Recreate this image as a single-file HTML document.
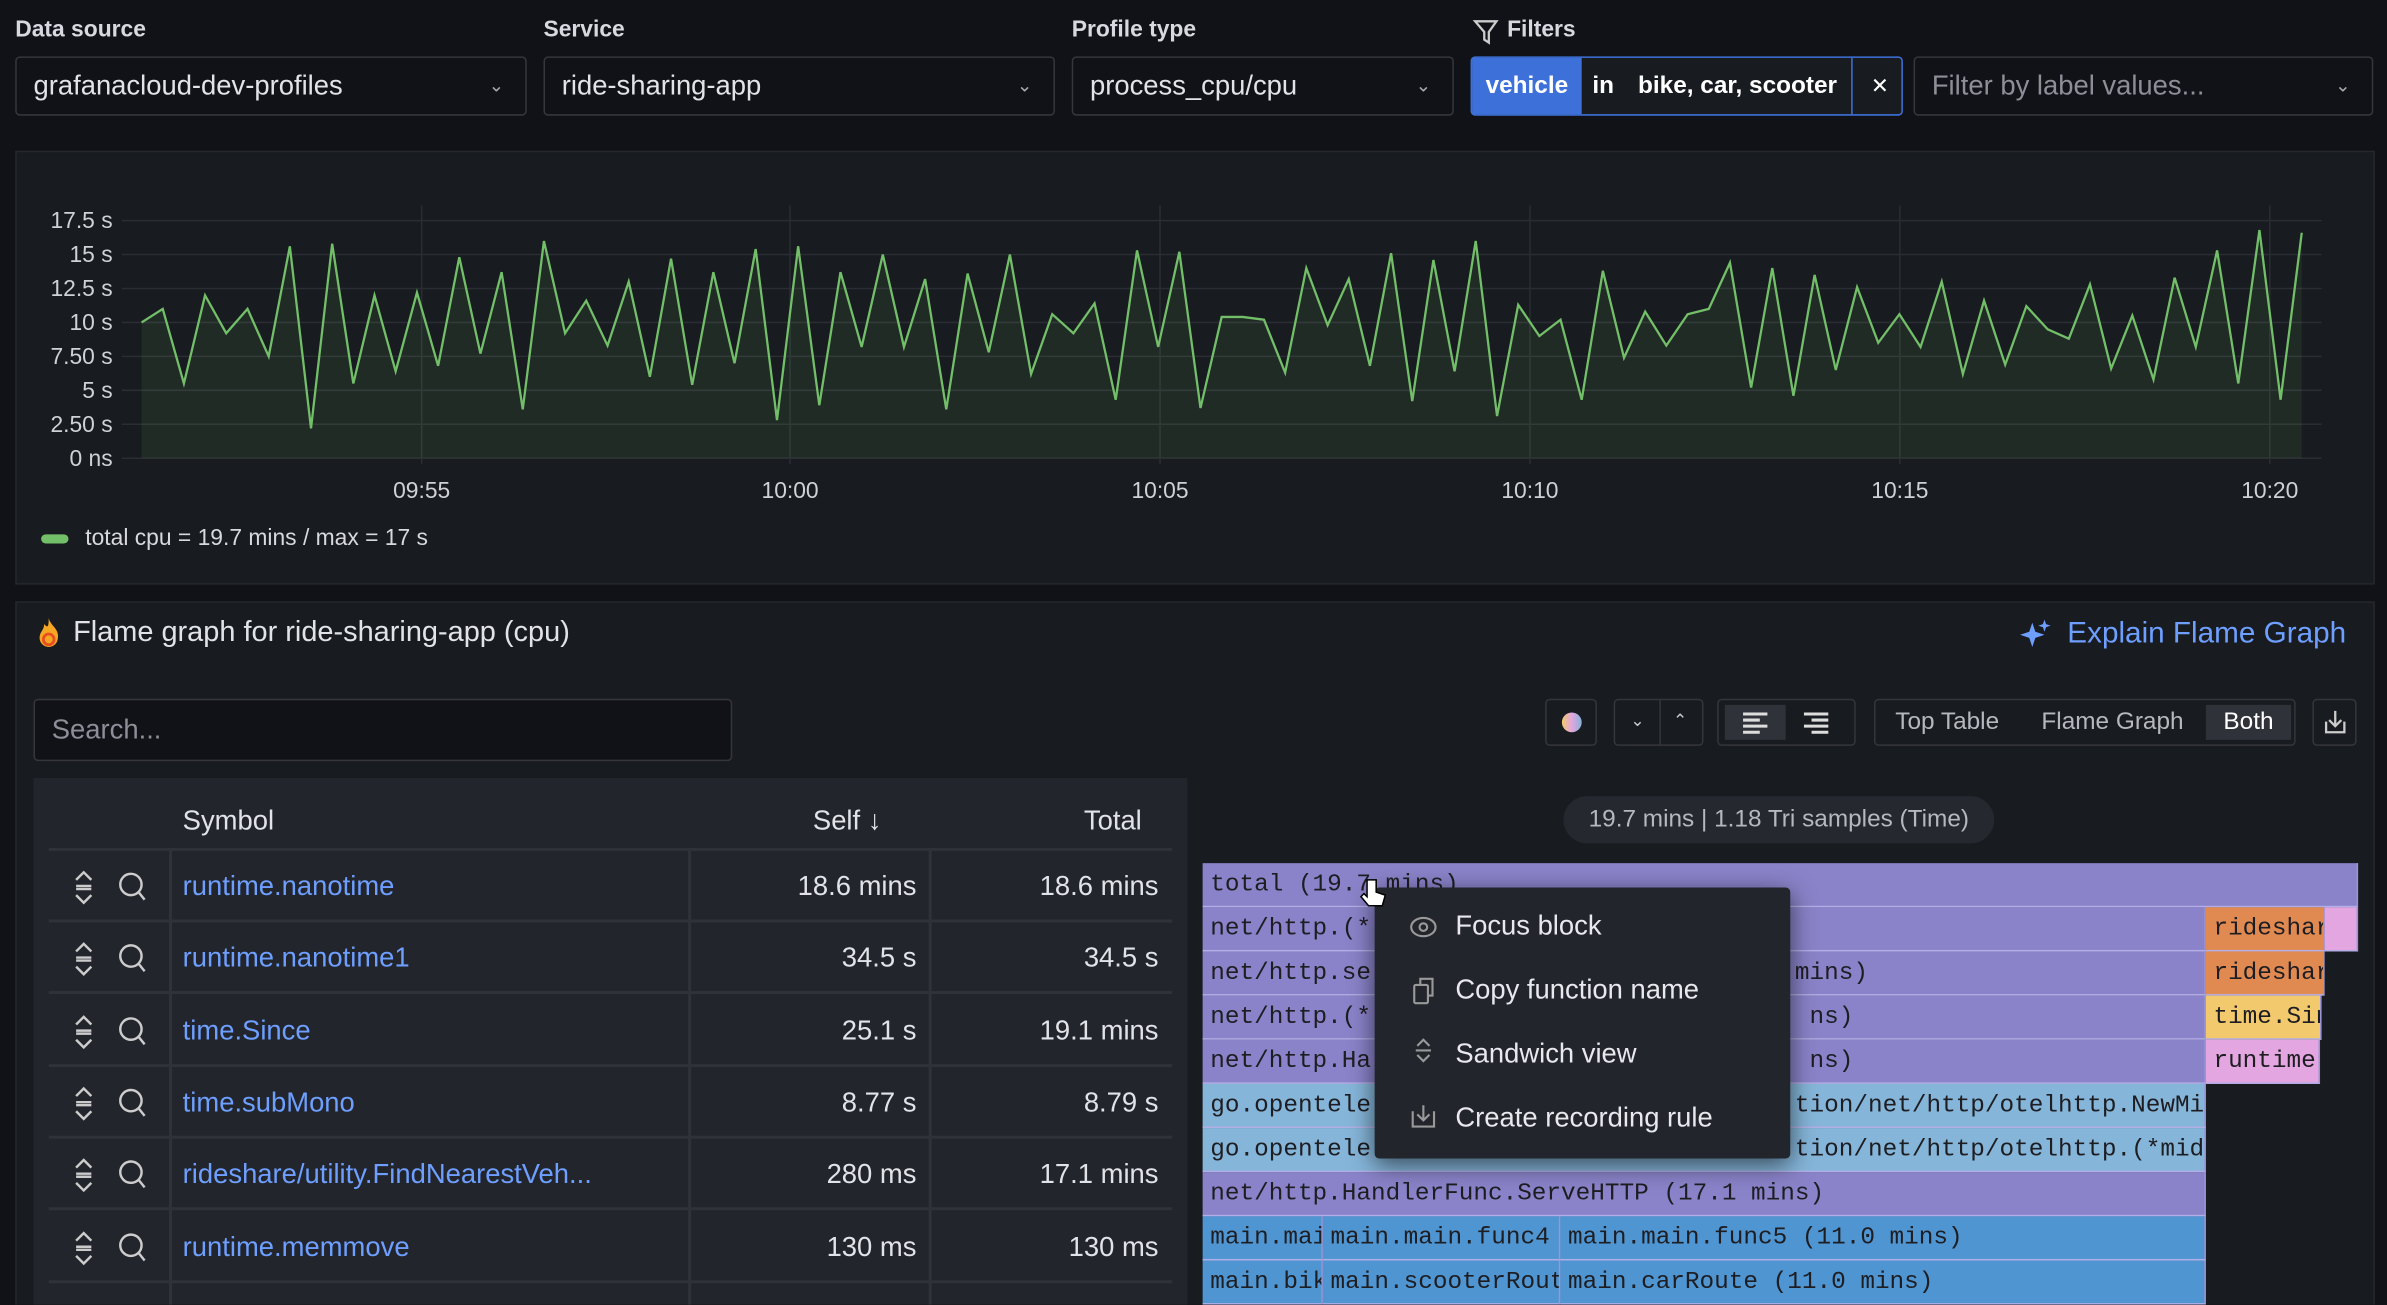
<!DOCTYPE html>
<html><head><meta charset="utf-8"><style>
html,body{margin:0;padding:0;background:#111217;overflow:hidden;width:2387px;height:1304px}
#w{position:absolute;left:0;top:0;width:1568px;height:857px;transform:scale(1.52232);transform-origin:0 0;font-family:"Liberation Sans",sans-serif;color:#ccccdc;overflow:hidden}
.a{position:absolute}
.lbl{font-size:15px;font-weight:bold;color:#d8d9e0;top:11px}
.sel{top:37px;height:39px;border:1px solid #34363c;border-radius:3px;background:#111217;box-sizing:border-box;font-size:18px;color:#e2e3e8;line-height:37px;padding-left:11px}
.chev{position:absolute;right:14px;top:0;font-size:12px;color:#aaa}
.mono{font-family:"Liberation Mono",monospace;font-size:16px;color:#1d1d22;line-height:29px;padding-left:5px;box-sizing:border-box;white-space:nowrap;overflow:hidden;border-right:1px solid #9a95d6;border-bottom:1px solid #b3aee6}
.row{height:47px;border-bottom:2px solid #2f3238;box-sizing:border-box}
.sym{color:#6e9fff;font-size:18px}
.num{font-size:18px;color:#e2e3e8;text-align:right}
.btn{top:459px;height:31px;border:1px solid #34363c;border-radius:3px;box-sizing:border-box}
.mi{font-size:18px;color:#e8e8ee;left:53px}
</style></head><body><div id="w">
<div class="a lbl" style="left:10px">Data source</div>
<div class="a lbl" style="left:357px">Service</div>
<div class="a lbl" style="left:704px">Profile type</div>
<div class="a lbl" style="left:990px">Filters</div>
<svg class="a" style="left:967px;top:12px" width="18" height="18" viewBox="0 0 18 18"><path d="M2 2h14l-5 7v7l-3-2v-5z" fill="none" stroke="#ccc" stroke-width="1.5"/></svg>
<div class="a sel" style="left:10px;width:336px">grafanacloud-dev-profiles<span class="chev">&#8964;</span></div>
<div class="a sel" style="left:357px;width:336px">ride-sharing-app<span class="chev">&#8964;</span></div>
<div class="a sel" style="left:704px;width:251px">process_cpu/cpu<span class="chev">&#8964;</span></div>
<div class="a" style="left:966px;top:37px;width:284px;height:39px;border:1px solid #3d71d9;border-radius:3px;box-sizing:border-box;background:#181b1f;font-size:16px;font-weight:bold;color:#fff;line-height:37px">
<span class="a" style="left:0;top:0;width:72px;height:37px;background:#3d71d9;text-align:center">vehicle</span>
<span class="a" style="left:79px">in</span><span class="a" style="left:109px">bike, car, scooter</span>
<span class="a" style="left:249px;top:0;width:1px;height:37px;background:#3d71d9"></span>
<span class="a" style="left:262px;font-weight:normal;font-size:14px">&#x2715;</span></div>
<div class="a sel" style="left:1257px;width:302px;color:#8e8e99">Filter by label values...<span class="chev">&#8964;</span></div>

<div class="a" style="left:10px;top:99px;width:1550px;height:285px;background:#181b1f;border:1px solid #25272c;box-sizing:border-box"></div>
<svg class="a" style="left:0;top:0" width="1568" height="400" id="ch"></svg>
<div class="a" style="left:27px;top:351px;width:18px;height:6px;border-radius:3px;background:#73bf69"></div>
<div class="a" style="left:56px;top:345px;font-size:15px;color:#d8d9e0">total cpu = 19.7 mins / max = 17 s</div>

<div class="a" style="left:10px;top:395px;width:1550px;height:470px;background:#181b1f;border:1px solid #25272c;box-sizing:border-box"></div>
<svg class="a" style="left:24px;top:405px" width="16" height="22" viewBox="0 0 16 22"><path d="M8 1C9 6 15 8 14 14a6 6 0 0 1-12 0C2 10 5 9 5 5c2 2 3 3 3-4z" fill="#f5a623"/><circle cx="8" cy="15" r="3.5" fill="none" stroke="#e84d1f" stroke-width="1.8"/></svg>
<div class="a" style="left:48px;top:405px;font-size:19px;color:#e2e3e8">Flame graph for ride-sharing-app (cpu)</div>
<svg class="a" style="left:1326px;top:406px" width="22" height="22" viewBox="0 0 22 22"><path d="M9 3l2 6 6 2-6 2-2 6-2-6-6-2 6-2z" fill="#6e9fff"/><path d="M17 1l1 3 3 1-3 1-1 3-1-3-3-1 3-1z" fill="#6e9fff"/></svg>
<div class="a" style="left:1358px;top:405px;font-size:19.5px;color:#6e9fff">Explain Flame Graph</div>
<div class="a" style="left:22px;top:459px;width:459px;height:41px;border:1px solid #34363c;border-radius:3px;background:#111217;box-sizing:border-box;font-size:18px;color:#8e8e99;line-height:39px;padding-left:11px">Search...</div>

<div class="a btn" style="left:1015px;width:34px"><div class="a" style="left:10px;top:8px;width:13px;height:13px;border-radius:50%;background:linear-gradient(90deg,#f2c96d,#e3a6e0,#85b3d8)"></div></div>
<div class="a btn" style="left:1060px;width:59px;font-size:11px;color:#ccc;line-height:29px"><span class="a" style="left:10px">&#8964;</span><span class="a" style="left:29px;top:0;width:1px;height:29px;background:#34363c"></span><span class="a" style="left:38px">&#8963;</span></div>
<div class="a btn" style="left:1128px;width:91px"><div class="a" style="left:4px;top:3px;width:40px;height:23px;background:#2f3238"></div>
<svg class="a" style="left:14px;top:7px" width="66" height="16"><g stroke="#ddd" stroke-width="2"><path d="M2 2h16M2 6h11M2 10h16M2 14h11M42 2h16M47 6h11M42 10h16M47 14h11"/></g></svg></div>
<div class="a btn" style="left:1231px;width:277px;font-size:16px;color:#b6b7bf;line-height:29px"><span class="a" style="left:13px">Top Table</span><span class="a" style="left:109px">Flame Graph</span><span class="a" style="left:217px;top:3px;width:56px;height:23px;background:#2f3238;color:#fff;line-height:23px;text-align:center">Both</span></div>
<div class="a btn" style="left:1519px;width:29px"><svg class="a" style="left:6px;top:5px" width="16" height="18"><path d="M8 2v10M4 8l4 4 4-4M2 9v7h12V9" fill="none" stroke="#ccc" stroke-width="1.5"/></svg></div>

<div class="a" style="left:22px;top:511px;width:758px;height:350px;background:#22252b"></div>
<div class="a" style="left:120px;top:529px;font-size:18px;color:#e2e3e8">Symbol</div>
<div class="a" style="left:534px;top:529px;font-size:18px;color:#e2e3e8">Self &#8595;</div>
<div class="a" style="left:712px;top:529px;font-size:18px;color:#e2e3e8">Total</div>
<div class="a" style="left:32px;top:557px;width:738px;height:2px;background:#2f3238"></div>
<div id="rows"></div>
<div class="a" style="left:111px;top:559px;width:2px;height:300px;background:#2f3238"></div>
<div class="a" style="left:452px;top:559px;width:2px;height:300px;background:#2f3238"></div>
<div class="a" style="left:610px;top:559px;width:2px;height:300px;background:#2f3238"></div>

<div class="a" style="left:1027px;top:523px;width:283px;height:31px;border-radius:16px;background:#25282e;font-size:16px;color:#b6b7bf;line-height:31px;text-align:center">19.7 mins | 1.18 Tri samples (Time)</div>
<div id="fl"></div>

<div class="a" style="left:903px;top:583px;width:273px;height:178px;background:#22252b;border-radius:3px;box-shadow:0 4px 16px rgba(0,0,0,.6)">
<svg class="a" style="left:22px;top:17px" width="20" height="152"><g fill="none" stroke="#999" stroke-width="1.4"><ellipse cx="10" cy="9" rx="8" ry="6"/><circle cx="10" cy="9" r="2.5"/><rect x="4" y="47" width="9" height="12" rx="1"/><path d="M8 47v-4h8v11h-3"/><path d="M6 87l4-4 4 4M6 93l4 4 4-4M5 90h10"/><path d="M10 126v10M6 132l4 4 4-4M3 130v10h14v-10"/></g></svg>
<div class="a mi" style="top:15px">Focus block</div><div class="a mi" style="top:57px">Copy function name</div><div class="a mi" style="top:99px">Sandwich view</div><div class="a mi" style="top:141px">Create recording rule</div></div>
<svg class="a" style="left:893px;top:575px" width="20" height="24"><path d="M5 3v11l-2-2-2 2 5 6h9l2-7-6-2V3z" fill="#fff" stroke="#000" stroke-width="1"/></svg>
</div>
<script>
var v=[10,11,5.5,12,9.2,11,7.5,15.6,2.2,15.8,5.5,12,6.4,12.2,6.8,14.8,7.7,13.7,3.6,16,9.2,11.6,8.3,13,6,14.7,5.4,13.7,7,15.4,2.8,15.6,3.9,13.7,8.2,15,8.2,13.2,3.6,13.6,7.8,15,6.2,10.6,9.2,11.4,4.3,15.3,8.2,15.2,3.7,10.4,10.4,10.2,6.3,14,9.8,13.2,6.8,15.1,4.2,14.6,6.4,16,3.1,11.3,9,10.2,4.3,13.8,7.4,10.8,8.3,10.6,11,14.4,5.2,14,4.6,13.5,6.5,12.6,8.5,10.6,8.2,13,6.2,11.6,6.9,11.2,9.5,8.8,12.8,6.6,10.5,5.8,13.3,8.2,15.3,5.5,16.8,4.3,16.6];
var x0=93,x1=1512,n=v.length,s='';
var Y=function(t){return 301-t*8.92};
var pts=v.map(function(t,i){return (x0+i*(x1-x0)/(n-1)).toFixed(1)+','+Y(t).toFixed(1)}).join(' ');
for(var k=0;k<8;k++){var y=301-k*22.3;s+='<line x1="80" x2="1525" y1="'+y+'" y2="'+y+'" stroke="#2a2d33"/><text x="74" y="'+(y+5)+'" fill="#d0d1d8" font-size="15" text-anchor="end" font-family="Liberation Sans">'+['0 ns','2.50 s','5 s','7.50 s','10 s','12.5 s','15 s','17.5 s'][k]+'</text>';}
var tl=['09:55','10:00','10:05','10:10','10:15','10:20'],tx=[277,519,762,1005,1248,1491];
for(k=0;k<6;k++){s+='<line x1="'+tx[k]+'" x2="'+tx[k]+'" y1="135" y2="305" stroke="#2a2d33"/><text x="'+tx[k]+'" y="327" fill="#d0d1d8" font-size="15" text-anchor="middle" font-family="Liberation Sans">'+tl[k]+'</text>';}
s+='<polygon points="93,301 '+pts+' 1512,301" fill="#73bf69" fill-opacity="0.1"/><polyline points="'+pts+'" fill="none" stroke="#73bf69" stroke-width="1.5"/>';
document.getElementById('ch').innerHTML=s;
var R=[['runtime.nanotime','18.6 mins','18.6 mins'],['runtime.nanotime1','34.5 s','34.5 s'],['time.Since','25.1 s','19.1 mins'],['time.subMono','8.77 s','8.79 s'],['rideshare/utility.FindNearestVeh...','280 ms','17.1 mins'],['runtime.memmove','130 ms','130 ms'],['','','']];
var h='';R.forEach(function(r,i){var t=559+i*47.3;h+='<div class="a row" style="left:32px;top:'+t+'px;width:738px"></div>';if(r[0]){h+='<svg class="a" style="left:47px;top:'+(t+12)+'px" width="50" height="24"><g fill="none" stroke="#ccc" stroke-width="1.6"><path d="M3 7l5-5 5 5M3 17l5 5 5-5M3 11h10M3 13h10"/><circle cx="39" cy="10" r="7"/><path d="M44 15l4 5"/></g></svg><div class="a sym" style="left:120px;top:'+(t+13)+'px">'+r[0]+'</div><div class="a num" style="left:460px;width:142px;top:'+(t+13)+'px">'+r[1]+'</div><div class="a num" style="left:618px;width:143px;top:'+(t+13)+'px">'+r[2]+'</div>';}});
document.getElementById('rows').innerHTML=h;
var P='#8a83c9',LB='#85b5d9',B='#4f95d1',O='#e08a52',Yl='#f2c96d',PK='#e3a6e0';
var sp='                             ';
var F=[[0,790,1548,P,'total (19.7 mins)'],[1,790,1448,P,'net/http.(*'],[1,1449,1526,O,'rideshare'],[1,1527,1548,PK,''],[2,790,1448,P,'net/http.se'+sp+'mins)'],[2,1449,1526,O,'rideshare'],[3,790,1448,P,'net/http.(*'+sp+' ns)'],[3,1449,1524,Yl,'time.Since'],[4,790,1448,P,'net/http.Ha'+sp+' ns)'],[4,1449,1523,PK,'runtime'],[5,790,1448,LB,'go.opentele'+sp+'tion/net/http/otelhttp.NewMiddleware'],[6,790,1448,LB,'go.opentele'+sp+'tion/net/http/otelhttp.(*middleware)'],[7,790,1448,P,'net/http.HandlerFunc.ServeHTTP (17.1 mins)'],[8,790,868,B,'main.main'],[8,869,1024,B,'main.main.func4'],[8,1025,1448,B,'main.main.func5 (11.0 mins)'],[9,790,868,B,'main.bike'],[9,869,1024,B,'main.scooterRoute'],[9,1025,1448,B,'main.carRoute (11.0 mins)'],[10,790,868,'#e0555a',''],[10,869,1024,PK,''],[10,1025,1448,Yl,'']];
h='';F.forEach(function(f){h+='<div class="a mono" style="left:'+f[1]+'px;top:'+(567+f[0]*29)+'px;width:'+(f[2]-f[1]+1)+'px;height:29px;background:'+f[3]+'">'+f[4].replace(/ /g,'&nbsp;')+'</div>';});
document.getElementById('fl').innerHTML=h;
</script>
</body></html>
